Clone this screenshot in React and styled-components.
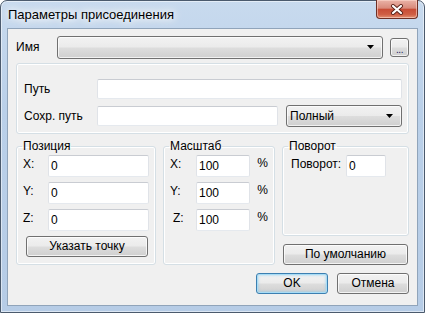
import React from 'react';
import styled, { createGlobalStyle } from 'styled-components';

const GlobalStyle = createGlobalStyle`
  html, body {
    margin: 0;
    padding: 0;
    background: #ffffff;
  }
  body {
    font-family: "Segoe UI", "Liberation Sans", Arial, sans-serif;
    font-size: 12px;
    color: #000;
  }
  * {
    box-sizing: border-box;
  }
`;

const Window = styled.div`
  width: 425px;
  height: 313px;
  display: flex;
  flex-direction: column;
  border: 1px solid #4b5a6d;
  border-radius: 7px 7px 0 0;
  padding: 0 6px 6px;
  background: linear-gradient(180deg, #c8daee 0%, #bad0e9 35%, #b6cce6 100%);
  box-shadow: inset 0 0 0 1px rgba(255, 255, 255, 0.5);
`;

const TitleBar = styled.div`
  height: 27px;
  display: flex;
  align-items: flex-start;
`;

const Title = styled.div`
  padding: 6px 0 0 1px;
  font-size: 13px;
  line-height: 16px;
  text-shadow: 0 0 6px #fff, 0 0 10px #fff, 0 0 14px rgba(255, 255, 255, 0.9);
`;

const CloseButton = styled.div`
  margin-left: auto;
  margin-top: -1px;
  width: 42px;
  height: 19px;
  border: 1px solid #6e2f25;
  border-top: none;
  border-radius: 0 0 4px 4px;
  background: linear-gradient(180deg, #eab3a7 0%, #d98a7b 45%, #c84d36 52%, #cf5e44 80%, #e29173 100%);
  box-shadow: inset 0 0 0 1px rgba(255, 220, 210, 0.55);
  display: flex;
  align-items: center;
  justify-content: center;
`;

const Client = styled.div`
  flex: 1;
  background: #f0f0f0;
  border: 1px solid #90a4ba;
  padding: 7px 8px 0 8px;
  display: flex;
  flex-direction: column;
`;

const NameRow = styled.div`
  display: flex;
  align-items: center;
  height: 23px;
`;

const Label = styled.span`
  width: ${(p) => p.$width || 'auto'};
  flex-shrink: 0;
  line-height: 15px;
  padding-left: ${(p) => p.$indent || 0}px;
  align-self: ${(p) => (p.$top ? 'flex-start' : 'center')};
  margin-top: ${(p) => (p.$top ? 2 : 0)}px;
  white-space: nowrap;
`;

const Combo = styled.div`
  width: ${(p) => p.$width || 'auto'};
  flex: ${(p) => (p.$grow ? 1 : 'none')};
  height: ${(p) => p.$height || 22}px;
  border: 1px solid #707070;
  border-radius: 3px;
  background: linear-gradient(180deg, #f2f2f2 0%, #ebebeb 48%, #dddddd 52%, #cfcfcf 100%);
  box-shadow: inset 0 0 0 1px rgba(255, 255, 255, 0.7);
  display: flex;
  align-items: center;
  padding: 0 7px 0 3px;
  line-height: 15px;
`;

const ComboText = styled.span`
  flex: 1;
`;

const EllipsisButton = styled.div`
  width: 19px;
  height: 19px;
  margin-left: 7px;
  border: 1px solid #707070;
  border-radius: 3px;
  background: linear-gradient(180deg, #f2f2f2 0%, #ebebeb 48%, #dddddd 52%, #cfcfcf 100%);
  box-shadow: inset 0 0 0 1px rgba(255, 255, 255, 0.7);
  font-size: 10px;
  line-height: 10px;
  text-align: center;
  padding-top: 6px;
  letter-spacing: -0.5px;
  color: #1a1a60;
`;

const Group = styled.fieldset`
  margin: 0;
  min-width: 0;
  border: 1px solid #d5dfe5;
  border-radius: 3px;
  box-shadow: inset 0 0 0 1px #ffffff;
  padding: ${(p) => p.$pad || '0 6px 7px 6px'};
  flex: ${(p) => p.$flex || 'none'};
  width: ${(p) => p.$width || 'auto'};
`;

const PathGroup = styled(Group)`
  margin-top: 4px;
`;

const Legend = styled.legend`
  padding: 0 1px;
  margin-left: -1px;
  line-height: 15px;
`;

const PathGrid = styled.div`
  display: grid;
  grid-template-columns: 65px 181px 1fr;
  column-gap: 8px;
  row-gap: 6px;
  align-items: center;
`;

const TextBox = styled.div`
  width: ${(p) => p.$width || 'auto'};
  height: ${(p) => p.$height || 21}px;
  grid-column: ${(p) => p.$span || 'auto'};
  background: #ffffff;
  border: 1px solid;
  border-color: #c9ccd2 #e0e3e8 #e5e9ee #e0e3e8;
  border-radius: 2px;
  padding: 3px 0 0 2px;
  line-height: 15px;
  color: #000;
`;

const PathLabel = styled.span`
  line-height: 15px;
  white-space: nowrap;
`;

const BottomArea = styled.div`
  display: flex;
  gap: 7px;
  margin-top: 5px;
`;

const Column = styled.div`
  flex: 1;
  display: flex;
  flex-direction: column;
`;

const FieldRows = styled.div`
  display: flex;
  flex-direction: column;
  gap: 5px;
  padding-top: 1px;
`;

const FieldRow = styled.div`
  display: flex;
  align-items: center;
`;

const Percent = styled.span`
  margin-left: 7px;
  align-self: flex-start;
  margin-top: 1px;
  line-height: 15px;
`;

const Button = styled.div`
  width: ${(p) => p.$width || 'auto'};
  height: 21px;
  margin: ${(p) => p.$margin || '0'};
  border: 1px solid ${(p) => (p.$default ? '#3c7fb1' : '#707070')};
  border-radius: 3px;
  background: linear-gradient(180deg, #f2f2f2 0%, #ebebeb 48%, #dddddd 52%, #cfcfcf 100%);
  box-shadow: ${(p) =>
    p.$default
      ? 'inset 0 0 0 1px #a8dcf5, inset 0 0 2px 2px rgba(120, 200, 240, 0.35)'
      : 'inset 0 0 0 1px rgba(255, 255, 255, 0.75)'};
  display: flex;
  align-items: center;
  justify-content: center;
  line-height: 15px;
  flex-shrink: 0;
`;

const DialogButtons = styled.div`
  display: flex;
  justify-content: flex-end;
  gap: 9px;
  margin-top: 8px;
`;

const Arrow = () => (
  <svg width="8" height="5" viewBox="0 0 8 5">
    <polygon points="0,0 7,0 3.5,4" fill="#000" />
  </svg>
);

const CloseGlyph = () => (
  <svg width="14" height="11" viewBox="0 0 14 11">
    <path d="M3 2 L11 9 M11 2 L3 9" stroke="#5a2219" strokeWidth="4" strokeLinecap="round" />
    <path d="M3 2 L11 9 M11 2 L3 9" stroke="#ffffff" strokeWidth="2.2" strokeLinecap="round" />
  </svg>
);

export default function App() {
  return (
    <>
      <GlobalStyle />
      <Window>
        <TitleBar>
          <Title>Параметры присоединения</Title>
          <CloseButton>
            <CloseGlyph />
          </CloseButton>
        </TitleBar>
        <Client>
          <NameRow>
            <Label $width="41px">Имя</Label>
            <Combo $grow $height={23}>
              <ComboText />
              <Arrow />
            </Combo>
            <EllipsisButton>...</EllipsisButton>
          </NameRow>

          <PathGroup $pad="15px 6px 6px 7px">
            <PathGrid>
              <PathLabel>Путь</PathLabel>
              <TextBox $span="2 / 4" $height={20} />
              <PathLabel>Сохр. путь</PathLabel>
              <TextBox $height={20} />
              <Combo $height={22}>
                <ComboText>Полный</ComboText>
                <Arrow />
              </Combo>
            </PathGrid>
          </PathGroup>

          <BottomArea>
            <Group $width="140px">
              <Legend>Позиция</Legend>
              <FieldRows>
                <FieldRow>
                  <Label $width="25px" $top>X:</Label>
                  <TextBox $width="101px" $height={22}>0</TextBox>
                </FieldRow>
                <FieldRow>
                  <Label $width="25px" $top>Y:</Label>
                  <TextBox $width="101px" $height={22}>0</TextBox>
                </FieldRow>
                <FieldRow>
                  <Label $width="25px" $top>Z:</Label>
                  <TextBox $width="101px" $height={22}>0</TextBox>
                </FieldRow>
                <Button $width="122px" $margin="0 0 0 3px">Указать точку</Button>
              </FieldRows>
            </Group>

            <Group $width="112px">
              <Legend>Масштаб</Legend>
              <FieldRows>
                <FieldRow>
                  <Label $width="26px" $top>X:</Label>
                  <TextBox $width="56px" $height={22}>100</TextBox>
                  <Percent>%</Percent>
                </FieldRow>
                <FieldRow>
                  <Label $width="26px" $top>Y:</Label>
                  <TextBox $width="56px" $height={22}>100</TextBox>
                  <Percent>%</Percent>
                </FieldRow>
                <FieldRow>
                  <Label $width="26px" $indent={3} $top>Z:</Label>
                  <TextBox $width="56px" $height={22}>100</TextBox>
                  <Percent>%</Percent>
                </FieldRow>
              </FieldRows>
            </Group>

            <Column>
              <Group $flex="1">
                <Legend>Поворот</Legend>
                <FieldRows>
                  <FieldRow>
                    <Label $width="57px" $indent={2} $top>Поворот:</Label>
                    <TextBox $width="40px" $height={22}>0</TextBox>
                  </FieldRow>
                </FieldRows>
              </Group>
              <Button $margin="8px 1px 0">По умолчанию</Button>
            </Column>
          </BottomArea>

          <DialogButtons>
            <Button $width="72px" $default>OK</Button>
            <Button $width="72px">Отмена</Button>
          </DialogButtons>
        </Client>
      </Window>
    </>
  );
}
